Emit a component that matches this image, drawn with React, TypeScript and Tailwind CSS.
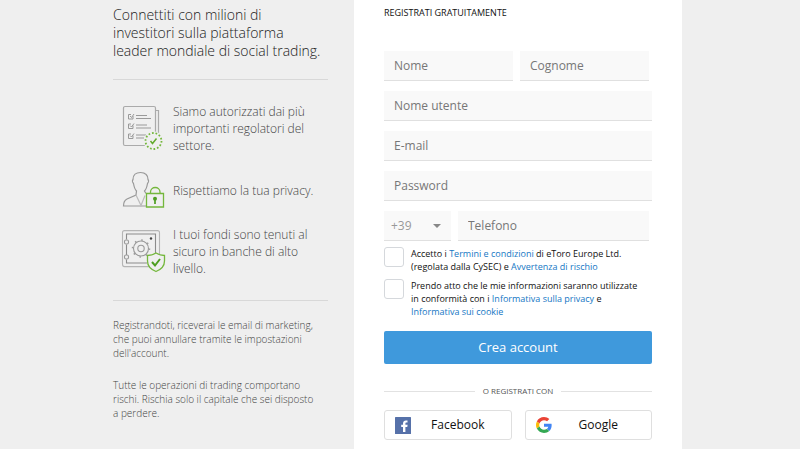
import { useState } from "react";
import type { InputHTMLAttributes, ReactNode } from "react";

function Field({ label, className = "", ...rest }: { label: string; className?: string } & InputHTMLAttributes<HTMLInputElement>) {
  return (
    <input
      aria-label={label}
      placeholder={label}
      className={`h-[30px] min-w-0 border-b border-[#e0e0e0] bg-[#f9f9f9] px-[10px] text-xs text-[#444] outline-none placeholder:text-[#777] ${className}`}
      {...rest}
    />
  );
}

function Consent({ id, children }: { id: string; children: ReactNode }) {
  const [checked, setChecked] = useState(false);
  return (
    <div className="flex items-start gap-[7px]">
      <input
        id={id}
        type="checkbox"
        checked={checked}
        onChange={(e) => setChecked(e.target.checked)}
        className="h-5 w-5 shrink-0 appearance-none rounded-[3px] border border-[#d5d8dc] bg-white checked:bg-[#3f99dc]"
      />
      <label htmlFor={id} className="text-[9px] leading-[13px] whitespace-nowrap text-[#111]">
        {children}
      </label>
    </div>
  );
}

function TextLink({ children }: { children: ReactNode }) {
  return (
    <a href="#" className="text-[#1577c4]">
      {children}
    </a>
  );
}

function ChecklistIcon() {
  return (
    <svg viewBox="0 0 46 48" className="h-12 w-[46px]" fill="none" stroke="#aaa" strokeWidth="1.2" aria-hidden="true">
      <path d="M36 5.500h2.500v25M35.500 28V3a1.500 1.500 0 0 0-1.500-1.500H5A1.500 1.500 0 0 0 3.500 3v36A1.500 1.500 0 0 0 5 40.500h21" />
      <g stroke="#999" strokeWidth="1">
        <path d="M13 11v3H8.500V9.500H11M10 11l1.500 1.500L14 9M16 10.500h11M16 13.500h15" />
        <path d="M13 20.500v3H8.500V19H11M10 20.500l1.500 1.500 2.500-3.500M16 20h11M16 23h15" />
        <path d="M13 30.500v3H8.500V29H11M10 30.500l1.500 1.500 2.500-3.500M16 30h10M16 33h8" />
      </g>
      <circle cx="33.500" cy="36" r="9.800" fill="#efefef" stroke="none" />
      <circle cx="33.500" cy="36" r="8" stroke="#74b73c" strokeWidth="1.800" strokeDasharray="1.700 1.890" />
      <path d="M30.500 36l2 2.500 4-5" stroke="#62aa2c" strokeWidth="1.500" />
    </svg>
  );
}

function PrivacyIcon() {
  return (
    <svg viewBox="0 0 46 40" className="h-10 w-[46px]" fill="none" stroke="#999" strokeWidth="1.200" aria-hidden="true">
      <path d="M26 23.500l-1.500-2.500c2-2 2.500-4.500 3-7.500 1-1 1.500-3 .5-4C28 5 25 2.500 20.500 2.500S13 5 13 9.500c-1 1-.5 3 .5 4 .5 3 1 5.500 3 7.500l-.5 4L7 29c-3 1.500-3.500 3.500-3.500 7H26" />
      <path d="M16 25l5 10.500 4-10" stroke="#bbb" />
      <path d="M26.500 23.500h17v13.500h-17z" stroke="#74b73c" strokeWidth="1.300" fill="#efefef" />
      <path d="M30.500 23.500V22c0-6 9.500-6 9.500 0v1.500" stroke="#74b73c" strokeWidth="1.300" />
      <circle cx="35" cy="28.800" r="2" fill="#4d9e20" stroke="none" />
      <path d="M35 29v5" stroke="#4d9e20" strokeWidth="1.700" />
    </svg>
  );
}

function SafeIcon() {
  return (
    <svg viewBox="0 0 46 44" className="h-11 w-[46px]" fill="none" stroke="#999" strokeWidth="1.100" aria-hidden="true">
      <rect x="2.500" y="0.600" width="37" height="36" rx="2" stroke="#b5b5b5" />
      <path d="M6.500 9.500V4h29v19M6.500 14.500V25M6.500 29.500v3.500H27" stroke="#8b8b8b" />
      <rect x="4.500" y="10" width="4" height="4" rx="1.500" />
      <rect x="4.500" y="25" width="4" height="4" rx="1.500" />
      <circle cx="21" cy="18.500" r="7.500" />
      <circle cx="21" cy="18.500" r="8.500" strokeDasharray="1.500 5.175" strokeWidth="1.500" />
      <circle cx="21" cy="18.500" r="3.200" />
      <circle cx="31" cy="8.500" r="1.200" fill="#444" stroke="none" />
      <path d="M27.500 25.500c3 0 6-.8 8.500-2.500 2.500 1.700 5.500 2.500 8.500 2.500V31c0 5-3.500 8.500-8.500 10.500-5-2-8.500-5.500-8.500-10.500z" fill="#efefef" stroke="#74b73c" strokeWidth="1.300" />
      <path d="M32 32l3 3.500 5-6.500" stroke="#4d9e20" strokeWidth="2" />
    </svg>
  );
}

function Benefit({ icon, children }: { icon: ReactNode; children: ReactNode }) {
  return (
    <li className="flex items-center pl-[7px]">
      <span className="mr-[7px] shrink-0">{icon}</span>
      <span className="text-xs leading-[17px]">{children}</span>
    </li>
  );
}

function FacebookLogo() {
  return (
    <svg viewBox="0 0 16 17" className="h-[17px] w-4" aria-hidden="true">
      <rect width="16" height="17" rx="0.500" fill="#5671a9" />
      <path d="M8 15V10H6.200V7.800H8V6.500c0-2 1.200-3 3-3h1.500v2h-1c-.8 0-1.100.4-1.100 1.100v1.200h2.200L12.300 10h-1.900v5z" fill="#fff" />
    </svg>
  );
}

function GoogleLogo() {
  return (
    <svg viewBox="0 0 48 48" className="h-4 w-4" aria-hidden="true">
      <path fill="#EA4335" d="M24 9.500c3.540 0 6.710 1.220 9.210 3.600l6.850-6.850C35.900 2.380 30.470 0 24 0 14.620 0 6.510 5.380 2.560 13.220l7.980 6.190C12.430 13.720 17.740 9.500 24 9.500z" />
      <path fill="#4285F4" d="M46.980 24.550c0-1.570-.15-3.090-.38-4.550H24v9.020h12.940c-.58 2.960-2.260 5.480-4.780 7.180l7.730 6c4.510-4.180 7.090-10.360 7.090-17.650z" />
      <path fill="#FBBC05" d="M10.530 28.590c-.48-1.450-.76-2.990-.76-4.590s.27-3.140.76-4.590l-7.980-6.190C.92 16.460 0 20.120 0 24s.92 7.540 2.560 10.780l7.970-6.190z" />
      <path fill="#34A853" d="M24 48c6.480 0 11.930-2.130 15.890-5.810l-7.730-6c-2.150 1.450-4.920 2.300-8.160 2.300-6.260 0-11.570-4.220-13.470-9.910l-7.980 6.190C6.510 42.620 14.620 48 24 48z" />
    </svg>
  );
}

function SocialButton({ logo, children }: { logo: ReactNode; children: ReactNode }) {
  return (
    <button type="button" className="flex h-[30px] flex-1 items-center rounded-[3px] border border-[#dfdfdf] bg-white pr-[6px] pl-[10px] text-xs text-[#111]">
      {logo}
      <span className="flex-1 text-center">{children}</span>
    </button>
  );
}

export default function App() {
  return (
    <div className="flex min-h-screen justify-center bg-[#efefef] pr-[5px] font-['Open_Sans','Noto_Sans',sans-serif]">
      <aside className="mr-[26px] w-[215px] pt-[6px] font-light text-[#444]">
        <h1 className="text-[14px] leading-[18px] whitespace-nowrap text-[#222]">
          Connettiti con milioni di
          <br />
          investitori sulla piattaforma
          <br />
          leader mondiale di social trading.
        </h1>
        <ul className="mt-[19px] flex flex-col gap-4 border-y border-[#d8d8d8] py-[23px]">
          <Benefit icon={<ChecklistIcon />}>
            Siamo autorizzati dai più
            <br />
            importanti regolatori del
            <br />
            settore.
          </Benefit>
          <Benefit icon={<PrivacyIcon />}>Rispettiamo la tua privacy.</Benefit>
          <Benefit icon={<SafeIcon />}>
            I tuoi fondi sono tenuti al
            <br />
            sicuro in banche di alto
            <br />
            livello.
          </Benefit>
        </ul>
        <div className="flex flex-col gap-[18px] pt-[17px] text-[10px] leading-[14px] whitespace-nowrap">
          <p>
            Registrandoti, riceverai le email di marketing,
            <br />
            che puoi annullare tramite le impostazioni
            <br />
            dell'account.
          </p>
          <p>
            Tutte le operazioni di trading comportano
            <br />
            rischi. Rischia solo il capitale che sei disposto
            <br />a perdere.
          </p>
        </div>
      </aside>

      <main className="w-[328px] bg-white px-[30px] pt-[6px]">
        <h2 className="text-[9px] leading-[14px] text-[#111]">REGISTRATI GRATUITAMENTE</h2>
        <form className="mt-[31px] flex flex-col" onSubmit={(e) => e.preventDefault()}>
          <div className="flex flex-col gap-[10px]">
            <div className="flex gap-[7px] pr-[3px]">
              <Field label="Nome" className="flex-1" />
              <Field label="Cognome" className="flex-1" />
            </div>
            <Field label="Nome utente" />
            <Field label="E-mail" type="email" />
            <Field label="Password" type="password" />
            <div className="flex gap-[7px] pr-[3px]">
              <div className="relative w-[67px]">
                <select aria-label="Prefisso" className="h-[30px] w-full appearance-none border-b border-[#e0e0e0] bg-[#f9f9f9] pl-[7px] text-xs text-[#999] outline-none">
                  <option>+39</option>
                </select>
                <svg viewBox="0 0 8 4" className="pointer-events-none absolute top-[13px] right-[10px] h-1 w-2" aria-hidden="true">
                  <path d="M0 0h8L4 4z" fill="#888" />
                </svg>
              </div>
              <Field label="Telefono" type="tel" className="flex-1" />
            </div>
          </div>
          <div className="mt-[6px] flex flex-col gap-[6px]">
            <Consent id="terms">
              Accetto i <TextLink>Termini e condizioni</TextLink> di eToro Europe Ltd.
              <br />
              (regolata dalla CySEC) e <TextLink>Avvertenza di rischio</TextLink>
            </Consent>
            <Consent id="privacy">
              Prendo atto che le mie informazioni saranno utilizzate
              <br />
              in conformità con i <TextLink>Informativa sulla privacy</TextLink> e
              <br />
              <TextLink>Informativa sui cookie</TextLink>
            </Consent>
          </div>
          <button type="submit" className="mt-[13px] h-[33px] rounded-[2px] bg-[#3f99dc] text-[13px] text-white">
            Crea account
          </button>
        </form>
        <div className="mt-5 flex items-center gap-2 text-[8px] leading-[14px] text-[#555]">
          <span className="h-px flex-1 bg-[#e2e2e2]" />
          O REGISTRATI CON
          <span className="h-px flex-1 bg-[#e2e2e2]" />
        </div>
        <div className="mt-3 flex gap-[13px]">
          <SocialButton logo={<FacebookLogo />}>Facebook</SocialButton>
          <SocialButton logo={<GoogleLogo />}>Google</SocialButton>
        </div>
      </main>
    </div>
  );
}
